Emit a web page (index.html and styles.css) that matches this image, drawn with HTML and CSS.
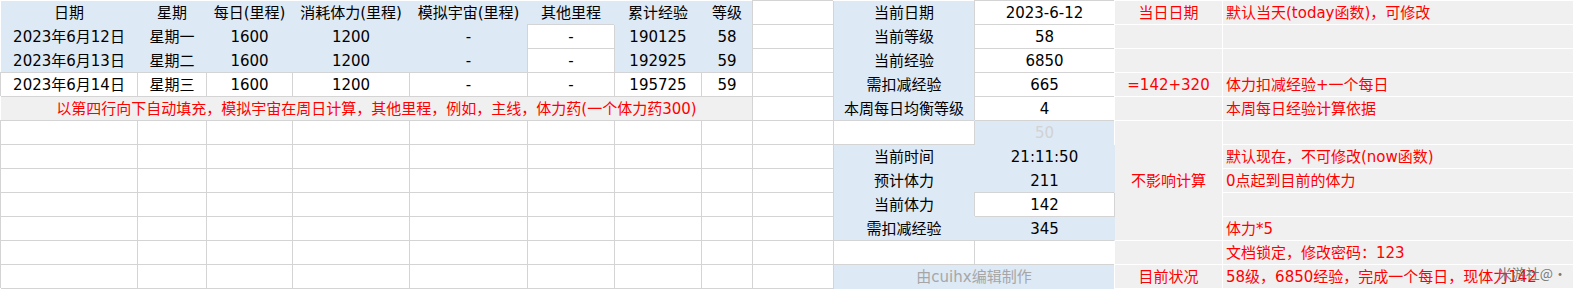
FILE: index.html
```html
<!DOCTYPE html>
<html lang="zh-CN">
<head>
<meta charset="utf-8">
<title>经验计算表</title>
<link rel="stylesheet" href="styles.css">
</head>
<body>
<div class="sheet">
  <!-- row 0 -->
  <div class="c b">日期</div><div class="c b">星期</div><div class="c b">每日(里程)</div><div class="c b">消耗体力(里程)</div><div class="c b">模拟宇宙(里程)</div><div class="c b">其他里程</div><div class="c b">累计经验</div><div class="c b">等级</div>
  <div class="c w"></div><div class="c b">当前日期</div><div class="c w">2023-6-12</div><div class="c g r">当日日期</div><div class="c g r l">默认当天(today函数)，可修改</div>
  <!-- row 1 -->
  <div class="c b">2023年6月12日</div><div class="c b">星期一</div><div class="c b">1600</div><div class="c b">1200</div><div class="c b">-</div><div class="c w">-</div><div class="c b">190125</div><div class="c b">58</div>
  <div class="c w"></div><div class="c b">当前等级</div><div class="c w">58</div><div class="c g"></div><div class="c g"></div>
  <!-- row 2 -->
  <div class="c b">2023年6月13日</div><div class="c b">星期二</div><div class="c b">1600</div><div class="c b">1200</div><div class="c b">-</div><div class="c w">-</div><div class="c b">192925</div><div class="c b">59</div>
  <div class="c w"></div><div class="c b">当前经验</div><div class="c w">6850</div><div class="c g"></div><div class="c g"></div>
  <!-- row 3 -->
  <div class="c w">2023年6月14日</div><div class="c w">星期三</div><div class="c w">1600</div><div class="c w">1200</div><div class="c w">-</div><div class="c w">-</div><div class="c w">195725</div><div class="c w">59</div>
  <div class="c w"></div><div class="c b">需扣减经验</div><div class="c w">665</div><div class="c g r">=142+320</div><div class="c g r l">体力扣减经验+一个每日</div>
  <!-- row 4 -->
  <div class="c g r span8">以第四行向下自动填充，模拟宇宙在周日计算，其他里程，例如，主线，体力药(一个体力药300)</div>
  <div class="c w"></div><div class="c b">本周每日均衡等级</div><div class="c w">4</div><div class="c g"></div><div class="c g r l">本周每日经验计算依据</div>
  <!-- row 5 -->
  <div class="c w"></div><div class="c w"></div><div class="c w"></div><div class="c w"></div><div class="c w"></div><div class="c w"></div><div class="c w"></div><div class="c w"></div><div class="c w"></div>
  <div class="c w"></div><div class="c b faint">50</div><div class="c g r rows5">不影响计算</div><div class="c g"></div>
  <!-- row 6 -->
  <div class="c w"></div><div class="c w"></div><div class="c w"></div><div class="c w"></div><div class="c w"></div><div class="c w"></div><div class="c w"></div><div class="c w"></div><div class="c w"></div>
  <div class="c b">当前时间</div><div class="c b">21:11:50</div><div class="c g r l">默认现在，不可修改(now函数)</div>
  <!-- row 7 -->
  <div class="c w"></div><div class="c w"></div><div class="c w"></div><div class="c w"></div><div class="c w"></div><div class="c w"></div><div class="c w"></div><div class="c w"></div><div class="c w"></div>
  <div class="c b">预计体力</div><div class="c b">211</div><div class="c g r l">0点起到目前的体力</div>
  <!-- row 8 -->
  <div class="c w"></div><div class="c w"></div><div class="c w"></div><div class="c w"></div><div class="c w"></div><div class="c w"></div><div class="c w"></div><div class="c w"></div><div class="c w"></div>
  <div class="c b">当前体力</div><div class="c w">142</div><div class="c g"></div>
  <!-- row 9 -->
  <div class="c w"></div><div class="c w"></div><div class="c w"></div><div class="c w"></div><div class="c w"></div><div class="c w"></div><div class="c w"></div><div class="c w"></div><div class="c w"></div>
  <div class="c b">需扣减经验</div><div class="c b">345</div><div class="c g r l">体力*5</div>
  <!-- row 10 -->
  <div class="c w"></div><div class="c w"></div><div class="c w"></div><div class="c w"></div><div class="c w"></div><div class="c w"></div><div class="c w"></div><div class="c w"></div><div class="c w"></div>
  <div class="c w"></div><div class="c w"></div><div class="c g"></div><div class="c g r l">文档锁定，修改密码：123</div>
  <!-- row 11 -->
  <div class="c w"></div><div class="c w"></div><div class="c w"></div><div class="c w"></div><div class="c w"></div><div class="c w"></div><div class="c w"></div><div class="c w"></div><div class="c w"></div>
  <div class="c b muted span2">由cuihx编辑制作</div><div class="c g r">目前状况</div><div class="c g r l">58级，6850经验，完成一个每日，现体力142</div>
</div>
<div class="watermark">米游社@·</div>
</body>
</html>
```
FILE: styles.css
```css
html, body {
  margin: 0;
  padding: 0;
  background: #ffffff;
  overflow: hidden;
}
body {
  position: relative;
  width: 1574px;
  height: 290px;
  font-family: "DejaVu Sans", "Noto Sans CJK SC", sans-serif;
  font-size: 15px;
  color: #000;
}
.sheet {
  display: grid;
  grid-template-columns: 137px 69px 86px 117px 118px 87px 87px 51px 81px 141px 140px 108px 1fr;
  grid-auto-rows: 24px;
  padding: 1px 0 0 1px;
}
.c {
  box-sizing: border-box;
  border-right: 1px solid #d4d4d4;
  border-bottom: 1px solid #d4d4d4;
  display: flex;
  align-items: center;
  justify-content: center;
  white-space: nowrap;
  overflow: visible;
  line-height: 1;
  padding-top: 1px;
}
.w {
  background: #ffffff;
  box-shadow: -1px -1px 0 0 #d4d4d4;
}
.b {
  background: #dde9f5;
  border-color: #dde9f5;
}
.g {
  background: #f0f0f0;
  border-color: #ffffff;
  box-shadow: -1px 0 0 0 #ffffff;
}
.r { color: #ff0000; }
.l {
  justify-content: flex-start;
  padding-left: 3px;
}
.faint { color: #d2d2d2; }
.muted { color: #a6a6a6; }
.span8 { grid-column: span 8; box-shadow: none; border-bottom-color: #d4d4d4; }
.span2 { grid-column: span 2; }
.rows5 { grid-row: span 5; }
.watermark {
  position: absolute;
  right: 7px;
  bottom: 10px;
  font-size: 14px;
  color: rgba(100, 100, 100, 0.85);
  font-family: "Noto Sans CJK SC", sans-serif;
  line-height: 1;
}
```
